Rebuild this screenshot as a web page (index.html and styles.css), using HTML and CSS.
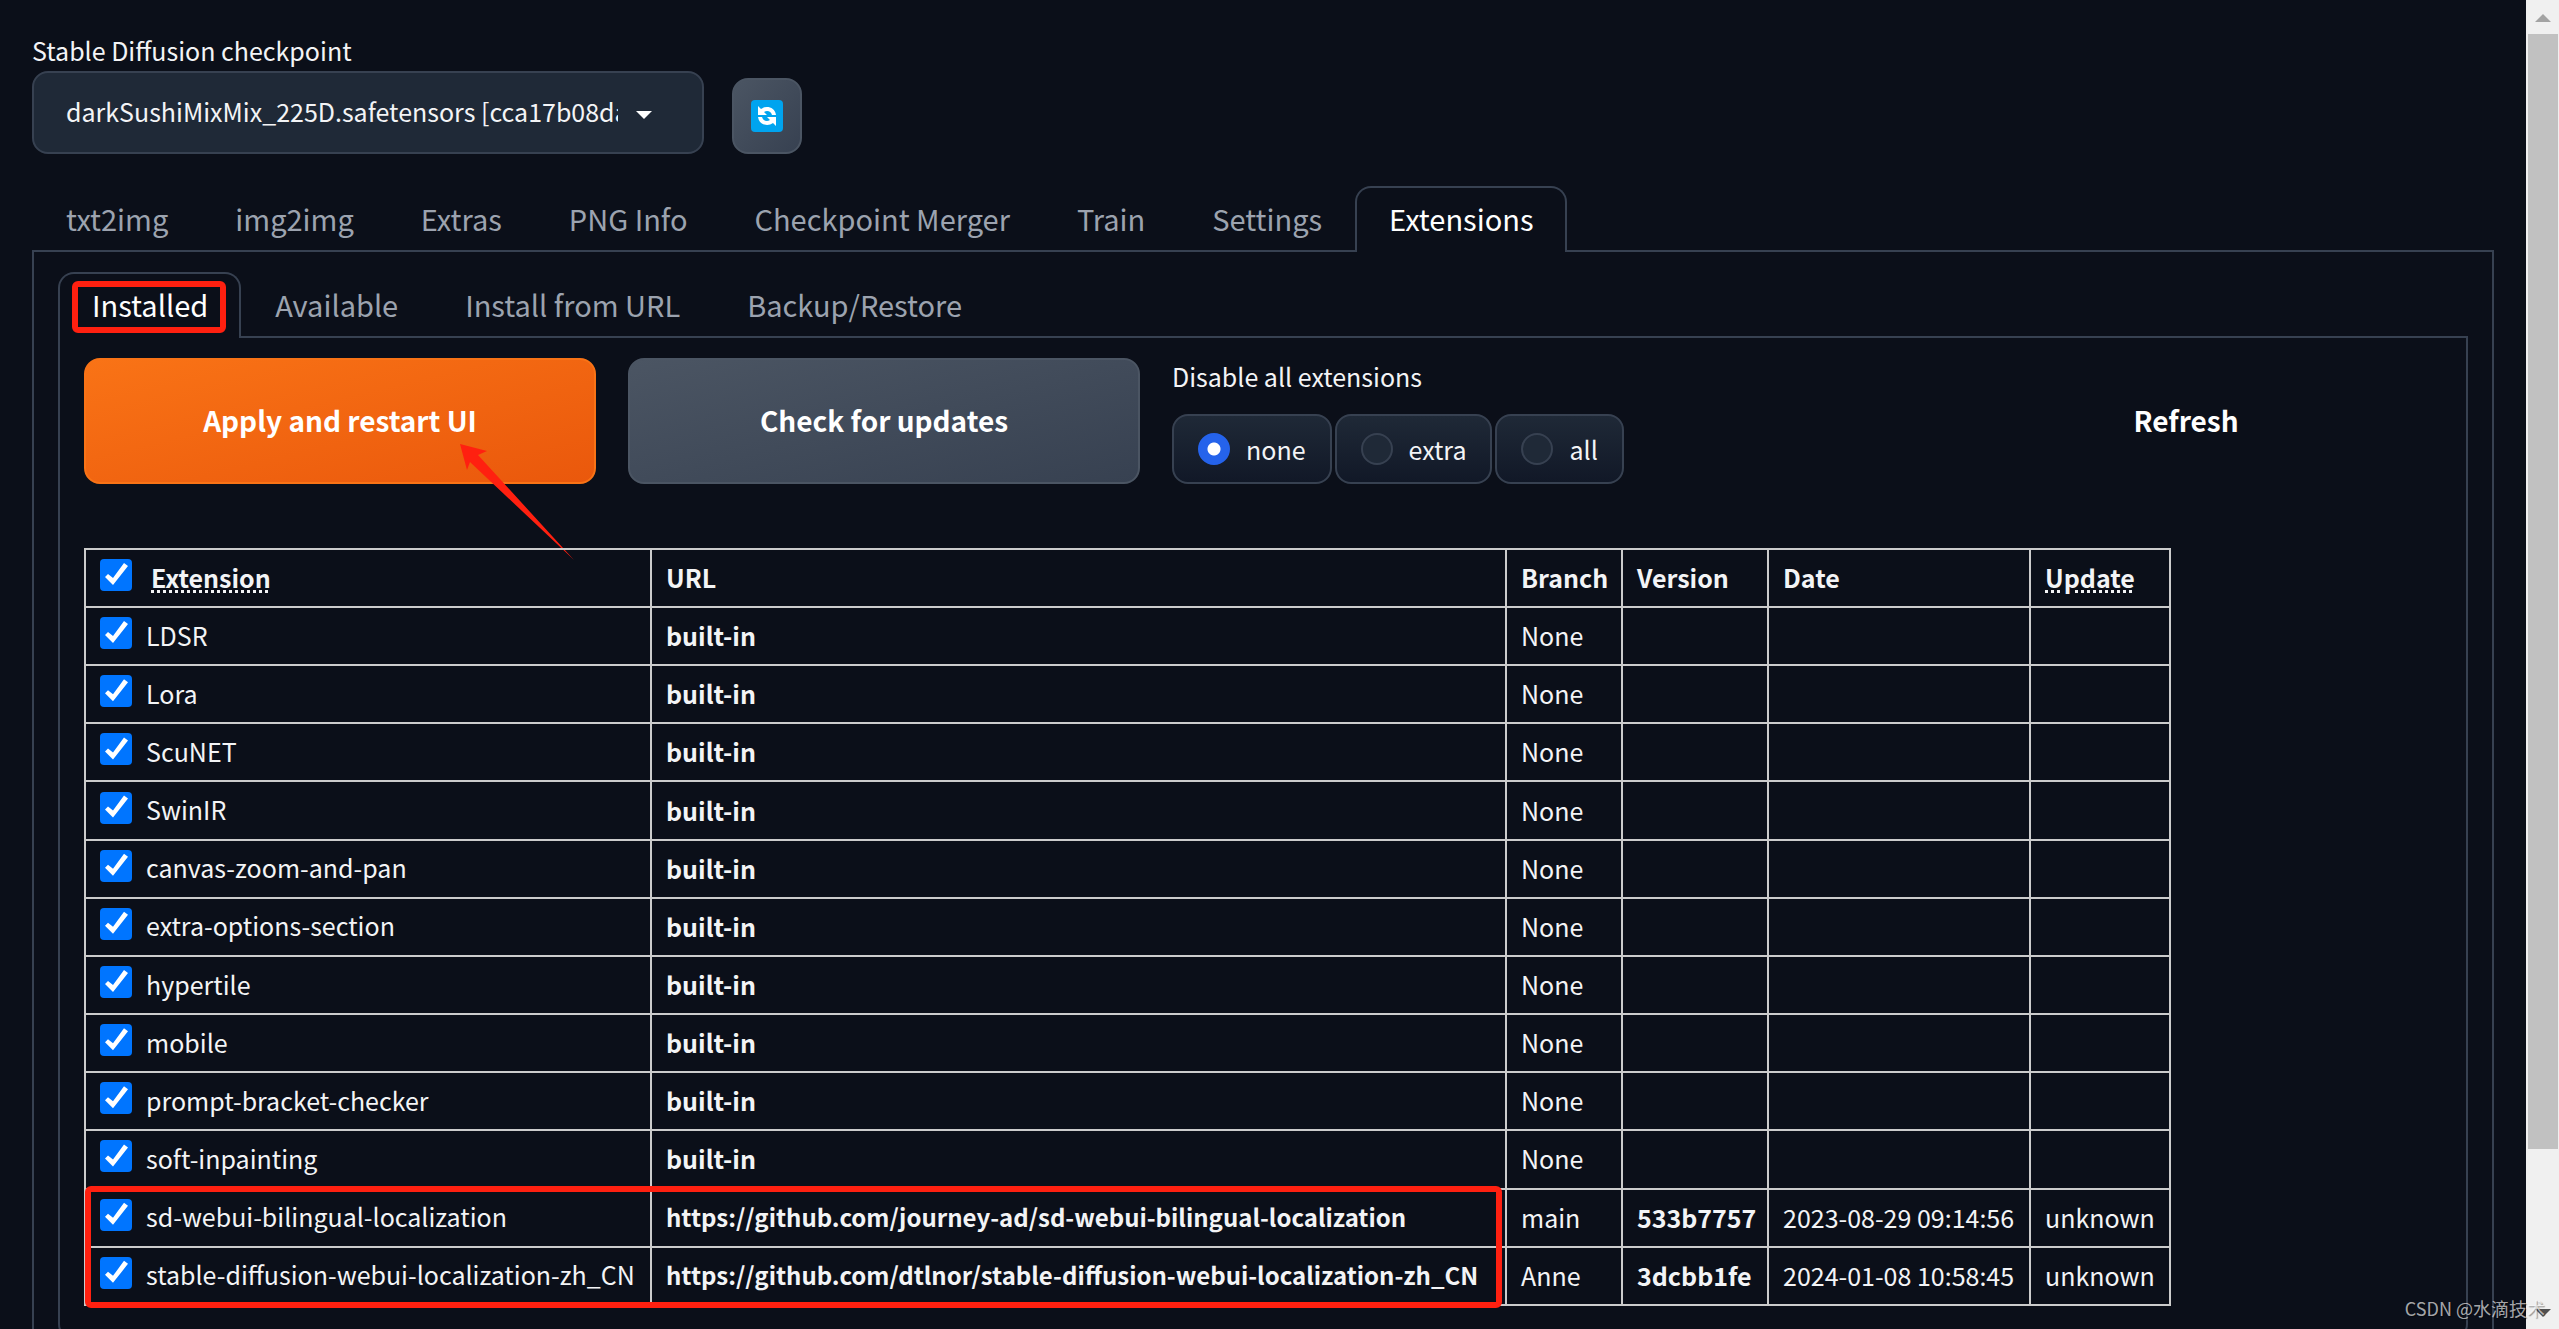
FILE: index.html
```html
<!DOCTYPE html>
<html lang="en">
<head>
<meta charset="utf-8">
<title>Stable Diffusion</title>
<link rel="stylesheet" href="styles.css">
</head>
<body>
<div class="app">
  <main class="page">
    <div class="quick">
      <div class="checkpoint">
        <label for="ckpt">Stable Diffusion checkpoint</label>
        <div class="select-box">
          <select id="ckpt"><option>darkSushiMixMix_225D.safetensors [cca17b08da]</option></select>
          <svg class="caret" viewBox="0 0 16 8" aria-hidden="true"><path d="M0 0H16L8 8Z"/></svg>
        </div>
      </div>
      <button class="reload" aria-label="Reload checkpoints">
        <svg viewBox="0 0 32 32" aria-hidden="true">
          <rect width="32" height="32" rx="4" fill="#00a4ef"/>
          <path d="M7 6L10 9C15 5 24 7 25 15H21C20 11 16 10 13 12L16 15H7Z" fill="#fff"/>
          <path d="M25 26L22 23C17 27 8 25 7 17H11C12 21 16 22 19 20L16 17H25Z" fill="#fff"/>
        </svg>
      </button>
    </div>

    <nav class="tabs">
      <button>txt2img</button><button>img2img</button><button>Extras</button><button>PNG Info</button><button>Checkpoint Merger</button><button>Train</button><button>Settings</button><button class="active">Extensions</button>
    </nav>

    <section class="panel outer">
      <nav class="tabs">
        <button class="active">Installed<span class="mark mark-tab"></span></button><button>Available</button><button>Install from URL</button><button>Backup/Restore</button>
      </nav>
      <section class="panel inner">
        <div class="actions">
          <div class="apply">
            <button class="btn primary">Apply and restart UI</button>
            <svg class="arrow" viewBox="0 0 114 116" aria-hidden="true"><path d="M0 0L27 7L18 11L114 116L10 18L7 26Z"/></svg>
          </div>
          <button class="btn secondary">Check for updates</button>
          <fieldset class="disable">
            <legend>Disable all extensions</legend>
            <div class="radios">
              <label><input type="radio" name="disable" checked>none</label>
              <label><input type="radio" name="disable">extra</label>
              <label><input type="radio" name="disable">all</label>
            </div>
          </fieldset>
          <button class="btn plain">Refresh</button>
        </div>

        <div class="table-box">
          <table>
            <colgroup><col class="c-ext"><col class="c-url"><col class="c-branch"><col class="c-ver"><col class="c-date"><col class="c-upd"></colgroup>
            <thead>
              <tr><th><label class="head"><input type="checkbox" checked><abbr title="Toggle all">Extension</abbr></label></th><th>URL</th><th>Branch</th><th>Version</th><th>Date</th><th><abbr title="Update status">Update</abbr></th></tr>
            </thead>
            <tbody>
              <tr><td><label><input type="checkbox" checked>LDSR</label></td><td><b>built-in</b></td><td>None</td><td></td><td></td><td></td></tr>
              <tr><td><label><input type="checkbox" checked>Lora</label></td><td><b>built-in</b></td><td>None</td><td></td><td></td><td></td></tr>
              <tr><td><label><input type="checkbox" checked>ScuNET</label></td><td><b>built-in</b></td><td>None</td><td></td><td></td><td></td></tr>
              <tr><td><label><input type="checkbox" checked>SwinIR</label></td><td><b>built-in</b></td><td>None</td><td></td><td></td><td></td></tr>
              <tr><td><label><input type="checkbox" checked>canvas-zoom-and-pan</label></td><td><b>built-in</b></td><td>None</td><td></td><td></td><td></td></tr>
              <tr><td><label><input type="checkbox" checked>extra-options-section</label></td><td><b>built-in</b></td><td>None</td><td></td><td></td><td></td></tr>
              <tr><td><label><input type="checkbox" checked>hypertile</label></td><td><b>built-in</b></td><td>None</td><td></td><td></td><td></td></tr>
              <tr><td><label><input type="checkbox" checked>mobile</label></td><td><b>built-in</b></td><td>None</td><td></td><td></td><td></td></tr>
              <tr><td><label><input type="checkbox" checked>prompt-bracket-checker</label></td><td><b>built-in</b></td><td>None</td><td></td><td></td><td></td></tr>
              <tr><td><label><input type="checkbox" checked>soft-inpainting</label></td><td><b>built-in</b></td><td>None</td><td></td><td></td><td></td></tr>
              <tr><td><label><input type="checkbox" checked>sd-webui-bilingual-localization</label></td><td><a class="repo" href="https://github.com/journey-ad/sd-webui-bilingual-localization">https://github.com/journey-ad/sd-webui-bilingual-localization</a></td><td>main</td><td><a href="#533b7757">533b7757</a></td><td>2023-08-29 09:14:56</td><td>unknown</td></tr>
              <tr><td><label><input type="checkbox" checked>stable-diffusion-webui-localization-zh_CN</label></td><td><a class="repo" href="https://github.com/dtlnor/stable-diffusion-webui-localization-zh_CN">https://github.com/dtlnor/stable-diffusion-webui-localization-zh_CN</a></td><td>Anne</td><td><a href="#3dcbb1fe">3dcbb1fe</a></td><td>2024-01-08 10:58:45</td><td>unknown</td></tr>
            </tbody>
          </table>
          <span class="mark mark-rows"></span>
        </div>
      </section>
    </section>
  </main>
  <aside class="scrollbar" aria-hidden="true">
    <svg viewBox="0 0 16 8"><path d="M0 8H16L8 0Z" fill="#a3a3a3"/></svg>
    <div class="track"><div class="thumb"></div></div>
    <svg viewBox="0 0 16 8"><path d="M0 0H16L8 8Z" fill="#505050"/></svg>
  </aside>
  <div class="watermark">CSDN @水滴技术</div>
</div>
</body>
</html>
```
FILE: styles.css
```css
* { box-sizing: border-box; }

body {
  margin: 0;
  background: #0b0f19;
  color: #f3f4f6;
  font: 25px/36px "Noto Sans CJK SC", "Noto Sans", sans-serif;
}

button, select, input { font: inherit; color: inherit; margin: 0; }
button { cursor: pointer; }

.app {
  position: relative;
  display: flex;
  height: 100vh;
  overflow: hidden;
}

.page { flex: 1; min-width: 0; padding: 32px 32px 0; }

/* checkpoint picker */
.quick { display: flex; align-items: flex-end; gap: 28px; }
.checkpoint { width: 672px; }
.checkpoint label { display: block; margin-bottom: 3px; }
.select-box { position: relative; }
.select-box select {
  display: block;
  width: 100%;
  height: 83px;
  padding: 0 84px 3px 32px;
  appearance: none;
  background: #1f2937;
  border: 2px solid #374151;
  border-radius: 16px;
}
.caret { position: absolute; right: 52px; top: 40px; width: 16px; height: 8px; fill: #fff; }
.reload {
  display: grid;
  place-items: center;
  width: 70px;
  height: 76px;
  padding: 0;
  border: 2px solid #4b5563;
  border-radius: 16px;
  background: linear-gradient(to bottom right, #4b5563, #374151);
}
.reload svg { width: 32px; height: 32px; }

/* tabs */
.tabs { display: flex; margin-bottom: -2px; }
.quick + .tabs { margin-top: 32px; }
.tabs button {
  position: relative;
  height: 66px;
  padding: 0 31px 5px 32px;
  border: 2px solid transparent;
  border-bottom: 0;
  border-radius: 16px 16px 0 0;
  background: none;
  color: #9ca3af;
  font-size: 29px;
  white-space: nowrap;
}
.tabs .active { background: #0b0f19; border-color: #374151; color: #fff; }

.panel { border: 2px solid #374151; }
.outer { padding: 20px 24px 40px; border-bottom: 0; }
.inner { padding: 20px 24px 32px; border-radius: 0 0 16px 16px; }

/* action row */
.actions { display: grid; grid-template-columns: 512fr 512fr 726fr 512fr; gap: 32px; }
.btn {
  width: 100%;
  height: 126px;
  padding: 0 0 3px;
  border: 2px solid transparent;
  border-radius: 16px;
  font-size: 28px;
  font-weight: 700;
  color: #fff;
}
.primary { background: linear-gradient(to bottom right, #f97316, #ea580c); border-color: #f97316; }
.secondary { background: linear-gradient(to bottom right, #4b5563, #374151); border-color: #4b5563; }
.plain { background: none; }
.apply { position: relative; }
.arrow { position: absolute; left: 376px; top: 86px; width: 114px; height: 116px; fill: #ff2010; }

.disable { margin: 0; padding: 0; border: 0; min-width: 0; }
.disable legend { padding: 0; margin-bottom: 20px; }
.radios { display: flex; gap: 3px; }
.radios label {
  display: flex;
  align-items: center;
  gap: 16px;
  height: 70px;
  padding: 0 24px;
  border: 2px solid #374151;
  border-radius: 16px;
  background: linear-gradient(to bottom, #1f2937, #111827);
}
.radios input {
  appearance: none;
  width: 32px;
  height: 32px;
  border: 2px solid #374151;
  border-radius: 50%;
  background: #1f2937;
}
.radios input:checked {
  border-color: #2563eb;
  background: radial-gradient(circle, #fff 6px, #2563eb 7px);
}

/* extensions table */
.table-box { position: relative; width: max-content; margin-top: 64px; }
table { height: 758px; table-layout: fixed; width: 2087px; border-collapse: collapse; }
.c-ext { width: 566px; }
.c-url { width: 855px; }
.c-branch { width: 116px; }
.c-ver { width: 146px; }
.c-date { width: 262px; }
.c-upd { width: 140px; }
th, td { height: 58px; padding: 0 14px 2px; border: 2px solid #ccc; text-align: left; white-space: nowrap; }
td a { color: inherit; font-weight: 700; text-decoration: none; }
.repo { font-size: 24px; }
table label { display: flex; align-items: center; gap: 14px; padding-bottom: 1px; }
table .head { gap: 19px; }
abbr { text-decoration: underline dotted 3px; text-underline-offset: 2px; }
table input {
  appearance: none;
  width: 32px;
  height: 32px;
  margin-bottom: 3px;
  border-radius: 4px;
  background: #0075ff;
}
table input:checked::before {
  content: "";
  display: block;
  width: 32px;
  height: 32px;
  background: #fff;
  clip-path: polygon(5px 18px, 8px 15px, 13px 19px, 24px 4px, 28px 7px, 13px 26px);
}

/* annotations */
.mark { position: absolute; border: 6px solid #ff2010; border-radius: 6px; pointer-events: none; }
.mark-tab { inset: 7px 13px 5px 12px; }
.mark-rows { left: 1px; bottom: -2px; width: 1417px; height: 122px; }

/* window scrollbar */
.scrollbar {
  display: flex;
  flex-direction: column;
  align-items: center;
  width: 33px;
  padding: 14px 1px 12px 2px;
  background: #f0f0f0;
}
.scrollbar svg { width: 16px; height: 8px; }
.track { flex: 1; width: 100%; padding: 12px 0; }
.thumb { height: calc(88% + 4px); background: #c1c1c1; }

.watermark {
  position: absolute;
  right: 14px;
  bottom: 8px;
  font-size: 18px;
  line-height: 26px;
  color: rgba(255, 255, 255, .65);
  text-shadow: 1px 1px 1px rgba(0, 0, 0, .4);
}
```
